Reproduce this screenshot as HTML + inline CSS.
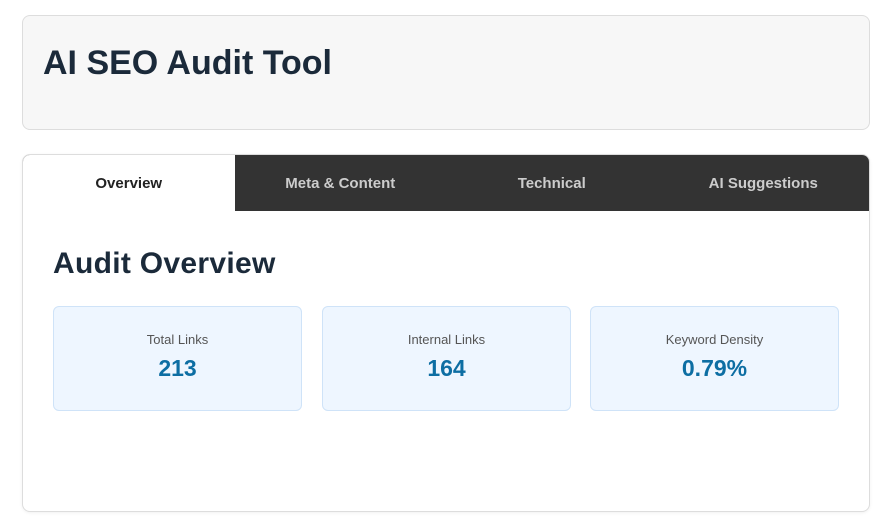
<!DOCTYPE html>
<html><head><meta charset="utf-8"><style>
*{box-sizing:border-box;margin:0;padding:0}
body{width:894px;height:532px;background:#fff;font-family:"Liberation Sans",sans-serif;position:relative;overflow:hidden}
.hdr{position:absolute;left:22px;top:15px;width:848px;height:115px;background:#f7f7f7;border:1px solid #ddd;border-radius:8px}
.hdr h1{position:absolute;left:20px;top:28px;font-size:34px;font-weight:bold;color:#1b2a3a;letter-spacing:0}
.main{position:absolute;left:22px;top:154px;width:848px;height:358px;background:#fff;border:1px solid #ddd;border-radius:8px;overflow:hidden;box-shadow:0 1px 3px rgba(0,0,0,.06)}
.tabs{display:flex;height:56px;background:#333}
.tab{width:212px;display:flex;align-items:center;justify-content:center;font-size:15px;font-weight:bold;color:#ccc}
.tab.a{background:#fff;color:#222}
.main h2{position:absolute;left:30px;top:92px;font-size:30px;font-weight:bold;color:#1b2a3a;letter-spacing:0.3px}
.c{position:absolute;top:151px;width:249px;height:105px;background:#eef6ff;border:1px solid #cfe3f8;border-radius:6px;text-align:center}
.c .l{margin-top:25px;font-size:13px;color:#555}
.c .v{margin-top:8px;font-size:23px;font-weight:bold;color:#0d6ea3}
</style></head><body>
<div class="hdr"><h1>AI SEO Audit Tool</h1></div>
<div class="main">
<div class="tabs"><div class="tab a">Overview</div><div class="tab">Meta &amp; Content</div><div class="tab">Technical</div><div class="tab">AI Suggestions</div></div>
<h2>Audit Overview</h2>
<div class="c" style="left:30px"><div class="l">Total Links</div><div class="v">213</div></div>
<div class="c" style="left:299px"><div class="l">Internal Links</div><div class="v">164</div></div>
<div class="c" style="left:567px"><div class="l">Keyword Density</div><div class="v">0.79%</div></div>
</div>
</body></html>
